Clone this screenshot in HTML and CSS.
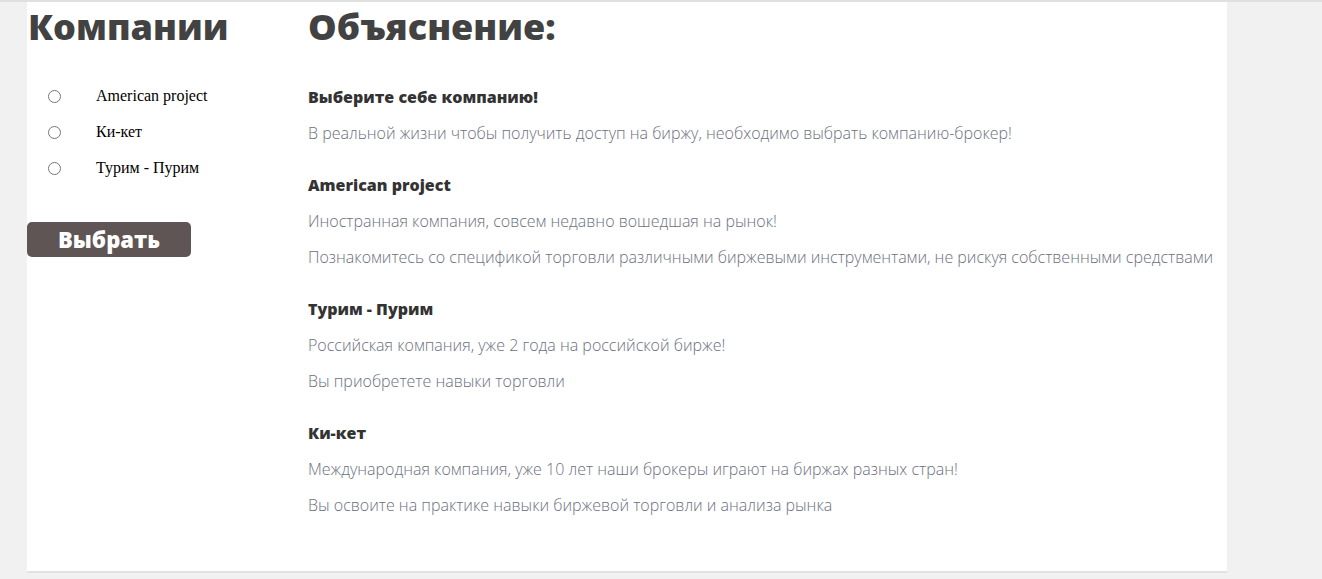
FILE: index.html
```html
<!DOCTYPE html>
<html lang="ru">
<head>
<meta charset="utf-8">
<title>Компании</title>
<link rel="stylesheet" href="styles.css">
</head>
<body>
<div class="page">
  <div class="panel">
    <aside class="companies">
      <h1 class="title">Компании</h1>
      <form class="choose">
        <label class="row"><input type="radio" name="company" class="radio"><span class="name">American project</span></label>
        <label class="row"><input type="radio" name="company" class="radio"><span class="name">Ки-кет</span></label>
        <label class="row"><input type="radio" name="company" class="radio"><span class="name">Турим - Пурим</span></label>
        <button type="button" class="btn">Выбрать</button>
      </form>
    </aside>
    <main class="explain">
      <h1 class="title">Объяснение:</h1>
      <h3 class="sub first">Выберите себе компанию!</h3>
      <p class="txt">В реальной жизни чтобы получить доступ на биржу, необходимо выбрать компанию-брокер!</p>
      <h3 class="sub">American project</h3>
      <p class="txt">Иностранная компания, совсем недавно вошедшая на рынок!</p>
      <p class="txt">Познакомитесь со спецификой торговли различными биржевыми инструментами, не рискуя собственными средствами</p>
      <h3 class="sub">Турим - Пурим</h3>
      <p class="txt">Российская компания, уже 2 года на российской бирже!</p>
      <p class="txt">Вы приобретете навыки торговли</p>
      <h3 class="sub">Ки-кет</h3>
      <p class="txt">Международная компания, уже 10 лет наши брокеры играют на биржах разных стран!</p>
      <p class="txt">Вы освоите на практике навыки биржевой торговли и анализа рынка</p>
    </main>
  </div>
</div>
</body>
</html>
```

FILE: styles.css
```css
html, body {
  margin: 0;
  padding: 0;
}
body {
  background: #f1f1f1;
  border-top: 2px solid #e0e0e0;
  font-family: "Open Sans", "Liberation Sans", sans-serif;
  height: 577px;
  overflow: hidden;
}
.page {
  padding-left: 27px;
}
.panel {
  width: 1200px;
  background: #fff;
  display: flex;
  padding-bottom: 56px;
  box-shadow: 0 2px 0 #e2e2e2;
}
.companies {
  width: 280px;
  padding-left: 1px;
  flex: none;
}
.explain {
  flex: 1;
}
.title {
  margin: 0;
  font-size: 36px;
  font-weight: 800;
  color: #424242;
  line-height: 49px;
}
.choose {
  display: flex;
  flex-direction: column;
  align-items: flex-start;
  margin-top: 27px;
}
.row {
  display: flex;
  align-items: center;
  height: 36px;
  font-family: "Liberation Serif", "Times New Roman", serif;
  font-size: 16px;
  color: #000;
}
.radio {
  margin: 0 0 0 20px;
  width: 13px;
  height: 13px;
}
.name {
  margin-left: 35px;
}
.btn {
  margin-top: 36px;
  margin-left: -1px;
  width: 164px;
  height: 35px;
  border: none;
  border-radius: 5px;
  background: #5f5554;
  color: #fff;
  font-family: "Open Sans", "Liberation Sans", sans-serif;
  font-weight: 800;
  font-size: 22px;
  line-height: 35px;
  padding: 0;
}
.sub {
  margin: 32px 0 0;
  font-size: 16px;
  font-weight: 800;
  color: #333;
  line-height: 20px;
}
.sub.first {
  margin-top: 36px;
}
.txt {
  margin: 16px 0 0;
  font-size: 16px;
  font-weight: 300;
  line-height: 20px;
  color: #6c7080;
}
```
